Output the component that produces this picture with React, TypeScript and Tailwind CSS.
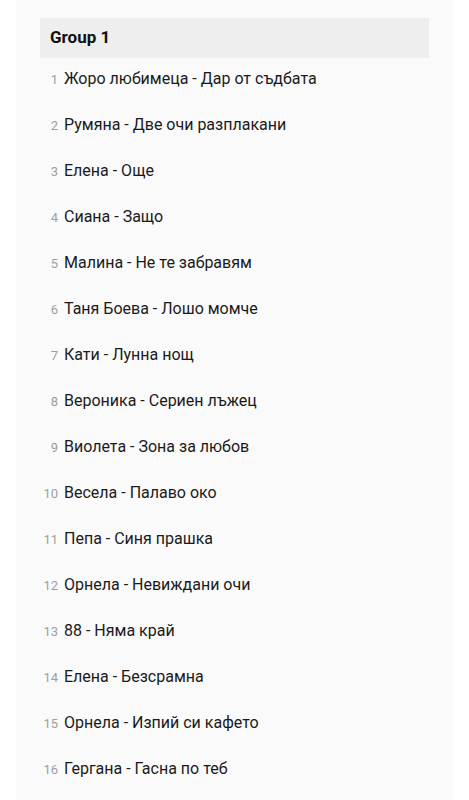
const songs = [
  "Жоро любимеца - Дар от съдбата",
  "Румяна - Две очи разплакани",
  "Елена - Още",
  "Сиана - Защо",
  "Малина - Не те забравям",
  "Таня Боева - Лошо момче",
  "Кати - Лунна нощ",
  "Вероника - Сериен лъжец",
  "Виолета - Зона за любов",
  "Весела - Палаво око",
  "Пепа - Синя прашка",
  "Орнела - Невиждани очи",
  "88 - Няма край",
  "Елена - Безсрамна",
  "Орнела - Изпий си кафето",
  "Гергана - Гасна по теб",
];

export default function App() {
  return (
    <div className="min-h-screen bg-white" style={{ fontFamily: "Roboto, 'Noto Sans', sans-serif" }}>
      <div className="mx-4 bg-[#fafafa] px-6 pt-[18px] pb-4">
        <div className="flex h-10 items-center bg-[#eeeeee] px-2.5 text-[17px] font-bold text-[#111]">Group 1</div>
        <ul>
          {songs.map((song, i) => (
            <li key={i} className="flex h-[46px] items-start pt-[10px]">
              <span className="w-[18px] shrink-0 pt-px text-right text-[13px] leading-[22px] text-[#9e9e9e]">{i + 1}</span>
              <span className="ml-1.5 text-base leading-[22px] text-[#1a1a1a]">{song}</span>
            </li>
          ))}
        </ul>
      </div>
    </div>
  );
}
